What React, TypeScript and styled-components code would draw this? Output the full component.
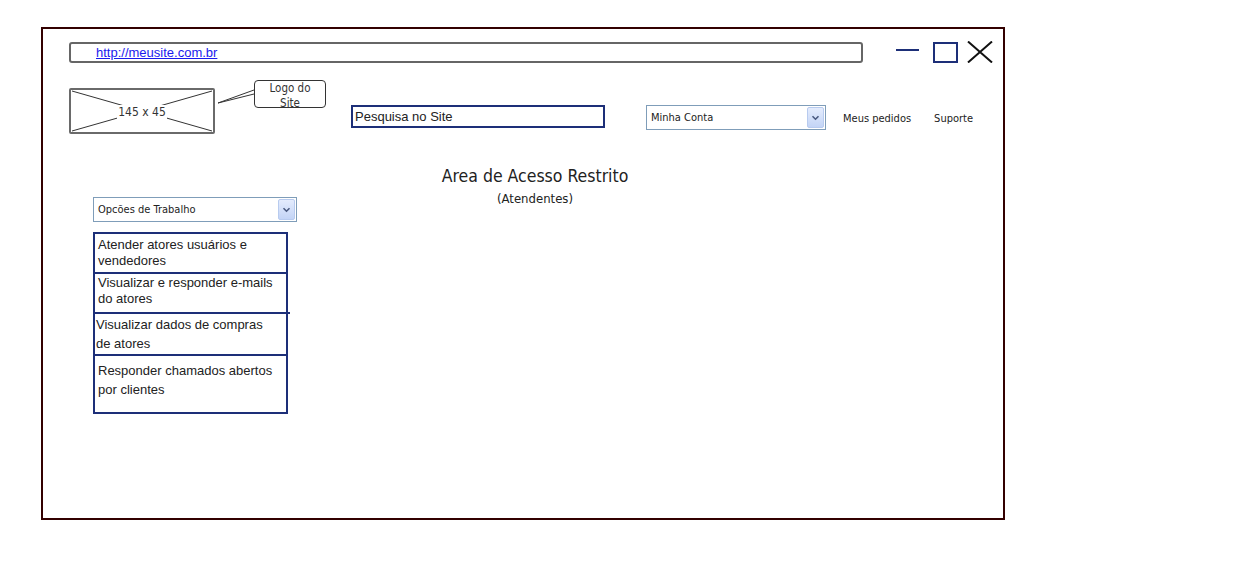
import styled, { createGlobalStyle } from "styled-components";

const GlobalStyle = createGlobalStyle`
  body {
    margin: 0;
    background: #ffffff;
    font-family: "Liberation Sans", Arial, sans-serif;
  }
`;

const navy = "#1d2f78";
const tahoma = `"DejaVu Sans Condensed", "DejaVu Sans", sans-serif`;

const Page = styled.div`
  width: 1251px;
  height: 563px;
  padding: 27px 0 0 41px;
  box-sizing: border-box;
`;

const Frame = styled.div`
  width: 964px;
  height: 493px;
  box-sizing: border-box;
  border: 2px solid #330000;
  display: flex;
  flex-direction: column;
`;

const TopBar = styled.div`
  display: flex;
  align-items: center;
  padding: 12px 0 0 26px;
`;

const UrlBar = styled.div`
  width: 794px;
  height: 21px;
  box-sizing: border-box;
  border: 2px solid #666666;
  border-radius: 3px;
  display: flex;
  align-items: center;
  padding-left: 25px;
`;

const UrlLink = styled.a`
  font-family: "Liberation Sans", Arial, sans-serif;
  font-size: 13px;
  color: #1a1aee;
  text-decoration: underline;
`;

const Controls = styled.div`
  display: flex;
  align-items: center;
  margin-left: 33px;
`;

const Minimize = styled.div`
  width: 23px;
  height: 2px;
  background: ${navy};
  margin-bottom: 4px;
`;

const Maximize = styled.div`
  width: 25px;
  height: 21px;
  box-sizing: border-box;
  border: 2px solid ${navy};
  margin-left: 14px;
`;

const CloseIcon = styled.svg`
  margin-left: 9px;
`;

const Header = styled.div`
  display: flex;
  align-items: flex-start;
  padding-left: 26px;
  margin-top: 25px;
`;

const LogoWrap = styled.div`
  position: relative;
`;

const LogoBox = styled.div`
  width: 146px;
  height: 46px;
  box-sizing: border-box;
  border: 2px solid #6a6a6a;
  border-radius: 2px;
  position: relative;
  display: flex;
  align-items: center;
  justify-content: center;
`;

const Cross = styled.svg`
  position: absolute;
  inset: 0;
`;

const LogoLabel = styled.span`
  position: relative;
  font-family: ${tahoma};
  font-size: 12px;
  color: #333;
  background: #fff;
  padding: 0 1px;
  margin-top: 2px;
`;

const Callout = styled.div`
  position: absolute;
  left: 185px;
  top: -8px;
  width: 72px;
  height: 28px;
  box-sizing: border-box;
  border: 1px solid #333;
  border-radius: 4px;
  background: #fff;
  font-family: ${tahoma};
  font-size: 11.5px;
  line-height: 15px;
  color: #333;
  text-align: center;
  padding-top: 0;
`;

const CalloutTail = styled.svg`
  position: absolute;
  left: 146px;
  top: 0;
`;

const Search = styled.div`
  width: 254px;
  height: 23px;
  box-sizing: border-box;
  border: 2px solid ${navy};
  margin: 17px 0 0 136px;
  display: flex;
  align-items: center;
  padding-left: 2px;
  font-size: 13px;
  color: #222;
`;

const Select = styled.div<{ $width: number }>`
  width: ${({ $width }) => $width}px;
  height: 25px;
  box-sizing: border-box;
  border: 1px solid #7f9db9;
  display: flex;
  align-items: center;
  justify-content: space-between;
  padding: 1px 1px 1px 4px;
  font-family: ${tahoma};
  font-size: 11px;
  color: #222;
`;

const SelectButton = styled.div`
  width: 17px;
  height: 21px;
  box-sizing: border-box;
  border: 1px solid #b8cbef;
  border-radius: 2px;
  background: linear-gradient(#e4ecfd, #c3d4f6);
  display: flex;
  align-items: center;
  justify-content: center;
`;

const AccountSelect = styled.div`
  margin: 17px 0 0 41px;
`;

const NavLink = styled.span<{ $gap: number }>`
  font-family: ${tahoma};
  font-size: 11px;
  color: #222;
  margin: 24px 0 0 ${({ $gap }) => $gap}px;
`;

const Body = styled.div`
  display: grid;
`;

const TitleBlock = styled.div`
  grid-area: 1 / 1;
  justify-self: center;
  margin: 31px 0 0 24px;
  text-align: center;
  font-family: ${tahoma};
  color: #222;
`;

const Title = styled.div`
  font-size: 17.5px;
  line-height: 22px;
`;

const Subtitle = styled.div`
  font-size: 13px;
  line-height: 16px;
  margin-top: 4px;
`;

const Sidebar = styled.div`
  grid-area: 1 / 1;
  justify-self: start;
  margin: 63px 0 0 50px;
`;

const OptionList = styled.div`
  width: 195px;
  margin-top: 10px;
  box-sizing: border-box;
  border: 2px solid ${navy};
`;

const Option = styled.div<{ $height: number; $line: number; $pad: number; $top: number; $overhang?: boolean }>`
  position: relative;
  height: ${({ $height }) => $height}px;
  line-height: ${({ $line }) => $line}px;
  padding: ${({ $top }) => $top}px 0 0 ${({ $pad }) => $pad}px;
  box-sizing: border-box;
  font-size: 13px;
  color: #222;
  border-bottom: 2px solid ${navy};

  &:last-child {
    border-bottom: none;
  }

  &::after {
    content: "";
    display: ${({ $overhang }) => ($overhang ? "block" : "none")};
    position: absolute;
    right: -4px;
    bottom: -2px;
    width: 4px;
    height: 2px;
    background: ${navy};
  }
`;

const Chevron = () => (
  <svg width="9" height="6" viewBox="0 0 9 6">
    <path d="M1.5 1.2 L4.5 4.2 L7.5 1.2" fill="none" stroke="#4a5a80" strokeWidth="1.6" />
  </svg>
);

const options = [
  { text: ["Atender atores usuários e", "vendedores"], height: 40, line: 16, pad: 3, top: 3 },
  { text: ["Visualizar e responder e-mails", "do atores"], height: 40, line: 16, pad: 3, top: 1, overhang: true },
  { text: ["Visualizar dados de compras", "de atores"], height: 42, line: 19, pad: 1, top: 1 },
  { text: ["Responder chamados abertos", "por clientes"], height: 56, line: 19, pad: 3, top: 5 },
];

export default function App() {
  return (
    <>
      <GlobalStyle />
      <Page>
        <Frame>
          <TopBar>
            <UrlBar>
              <UrlLink href="#">http://meusite.com.br</UrlLink>
            </UrlBar>
            <Controls>
              <Minimize />
              <Maximize />
              <CloseIcon width="26" height="22" viewBox="0 0 26 22">
                <path d="M1 0.5 L25 21.5 M25 0.5 L1 21.5" stroke="#111" strokeWidth="2" />
              </CloseIcon>
            </Controls>
          </TopBar>

          <Header>
            <LogoWrap>
              <LogoBox>
                <Cross width="142" height="42" viewBox="0 0 142 42" preserveAspectRatio="none">
                  <path d="M1 1 L141 41 M141 1 L1 41" stroke="#333" strokeWidth="1" fill="none" />
                </Cross>
                <LogoLabel>145 x 45</LogoLabel>
              </LogoBox>
              <CalloutTail width="40" height="20" viewBox="0 0 40 20">
                <path d="M3 15 L39 2 M3 15 L39 6" stroke="#333" strokeWidth="1" fill="none" />
              </CalloutTail>
              <Callout>
                Logo do
                <br />
                Site
              </Callout>
            </LogoWrap>
            <Search>Pesquisa no Site</Search>
            <AccountSelect>
              <Select $width={180}>
                Minha Conta
                <SelectButton>
                  <Chevron />
                </SelectButton>
              </Select>
            </AccountSelect>
            <NavLink $gap={17}>Meus pedidos</NavLink>
            <NavLink $gap={23}>Suporte</NavLink>
          </Header>

          <Body>
            <TitleBlock>
              <Title>Area de Acesso Restrito</Title>
              <Subtitle>(Atendentes)</Subtitle>
            </TitleBlock>
            <Sidebar>
              <Select $width={204}>
                Opcões de Trabalho
                <SelectButton>
                  <Chevron />
                </SelectButton>
              </Select>
              <OptionList>
                {options.map((o) => (
                  <Option
                    key={o.text[0]}
                    $height={o.height}
                    $line={o.line}
                    $pad={o.pad}
                    $top={o.top}
                    $overhang={o.overhang}
                  >
                    {o.text[0]}
                    <br />
                    {o.text[1]}
                  </Option>
                ))}
              </OptionList>
            </Sidebar>
          </Body>
        </Frame>
      </Page>
    </>
  );
}
